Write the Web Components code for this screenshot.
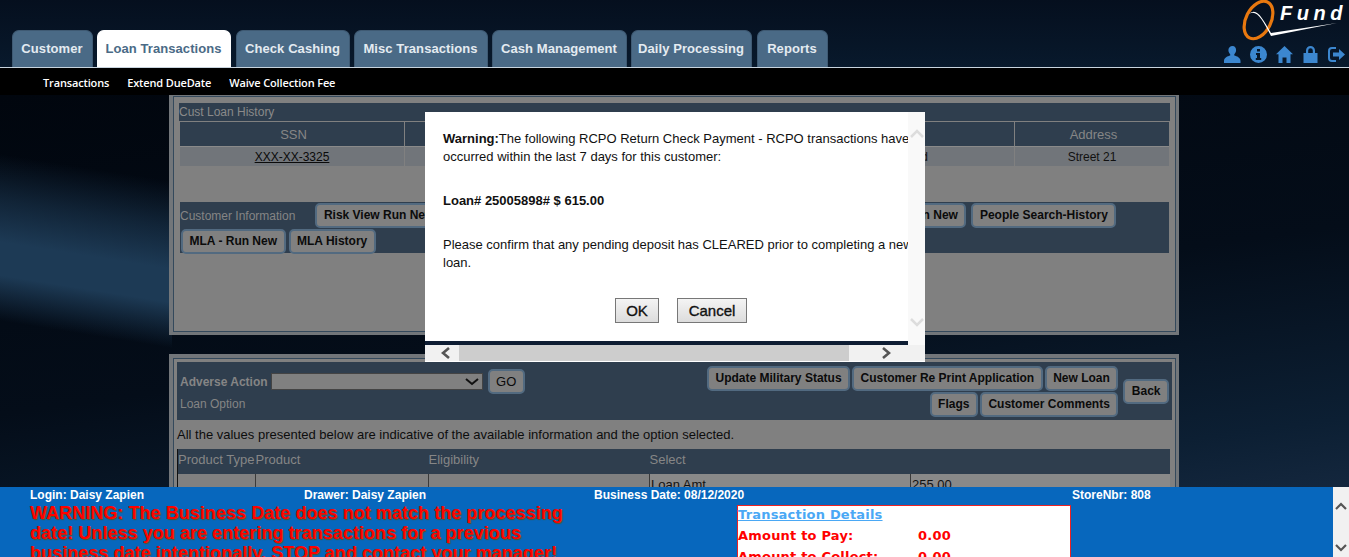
<!DOCTYPE html>
<html><head><meta charset="utf-8">
<style>
html,body{margin:0;height:557px;overflow:hidden}
body{font-family:"Liberation Sans",Arial,sans-serif;background:#050e1b;position:relative}
app-shell{display:flex;flex-direction:column;width:1349px;height:557px}
</style></head><body>
<app-shell>
  <app-header></app-header>
  <sub-nav></sub-nav>
  <main-area></main-area>
  <app-footer></app-footer>
</app-shell>
<warn-dialog></warn-dialog>
<script>
function def(name,html,setup){
  customElements.define(name,class extends HTMLElement{
    constructor(){super();this.attachShadow({mode:'open'}).innerHTML=html;}
    connectedCallback(){setup&&setup(this);}
  });
}
def('nav-tab',`<style>
:host{display:block;height:37px;box-sizing:border-box;border-radius:7px 7px 0 0;background:#4a6a86;border:1px solid #3f5a73;border-bottom:0;color:#e4ebf1;font:bold 13px/36px "Liberation Sans",sans-serif;letter-spacing:.08px;text-align:center;white-space:nowrap;padding-right:1px}
:host([active]){background:#fff;color:#4a6a86;border-color:#fff}
</style><slot></slot>`);
def('app-header',`<style>
:host{display:block;height:67px;flex:none;position:relative;background:linear-gradient(#050f1e,#08192c)}
nav{display:flex;gap:4px;padding:30px 0 0 12px;height:37px;box-sizing:content-box}
.logo{position:absolute;left:1240px;top:0}
.fund{position:absolute;left:1280px;top:2px;font:italic bold 20px "Liberation Sans",sans-serif;letter-spacing:4.5px;color:#fff;white-space:nowrap}
.fund i{letter-spacing:0}
.icons{position:absolute;right:4px;top:46px;display:flex;gap:9px}
.icons svg{width:17px;height:17px;fill:#3c87cf;display:block}
</style>
<nav>
<nav-tab style="width:81px">Customer</nav-tab>
<nav-tab active style="width:134px">Loan Transactions</nav-tab>
<nav-tab style="width:114px;margin-left:1px">Check Cashing</nav-tab>
<nav-tab style="width:134px">Misc Transactions</nav-tab>
<nav-tab style="width:135px">Cash Management</nav-tab>
<nav-tab style="width:121px">Daily Processing</nav-tab>
<nav-tab style="width:71px;margin-left:1px">Reports</nav-tab>
</nav>
<svg class="logo" width="109" height="42" viewBox="0 0 109 42">
<ellipse cx="18.500" cy="20" rx="12.500" ry="20" transform="rotate(27 18.500 20)" fill="none" stroke="#e8780f" stroke-width="3.200"/>
<path d="M9 14C17 7 22 18 31 33L97 23 31 36C23 21 17 9 9 14Z" fill="#fff"/>
</svg>
<span class="fund">Fun<i>d</i></span>
<div class="icons">
<svg viewBox="0 0 17 17"><path d="M8.5 0c2.4 0 3.6 1.800 3.600 4 0 2-1 3.400-1.800 4.200v1.300c2.500 .7 6.200 2 6.200 5.500v2H0v-2c0-3.500 3.700-4.800 6.200-5.500V8.200C5.400 7.400 4.400 6 4.400 4c0-2.200 1.700-4 4.100-4z"/></svg>
<svg viewBox="0 0 17 17"><path fill-rule="evenodd" d="M8.500 0a8.500 8.500 0 1 0 0 17 8.500 8.500 0 0 0 0-17zM7 3h3v2.500H7zM6 7h4v5h1.200v2H5.800v-2H7V9H6z"/></svg>
<svg viewBox="0 0 17 17"><path d="M8.500 0 17 8.200h-2.500V17h-4v-5.500h-4V17h-4V8.200H0z"/></svg>
<svg viewBox="0 0 17 17"><path fill-rule="evenodd" d="M4 7V4.500a4.500 4.500 0 0 1 9 0V7h2.500v10H1.500V7zm2.200 0h4.600V4.500a2.300 2.300 0 0 0-4.600 0z"/></svg>
<svg viewBox="0 0 17 17"><path d="M8 1H4a4 4 0 0 0-4 4v7a4 4 0 0 0 4 4h4v-2H4a2 2 0 0 1-2-2V5a2 2 0 0 1 2-2h4z"/><path d="M11 3v3.500H5v4h6V14l6-5.500z"/></svg>
</div>`);
def('sub-nav',`<style>
:host{display:block;flex:none;height:28px;box-sizing:border-box;border-top:1px solid #c8d4de;background:#000;color:#fff;font:600 11px/29px "Open Sans",sans-serif;letter-spacing:-.15px}
div{display:flex;gap:18px;padding-left:43px}
</style><div><span>Transactions</span><span>Extend DueDate</span><span>Waive Collection Fee</span></div>`);
def('gray-panel',`<style>
:host{display:block;box-sizing:border-box;background:#808080;border-style:solid;border-color:#72767a;border-width:var(--bw,4px 3px 3px 4px);position:relative}
.in{border:1px solid #34495c;padding:var(--pad,6px 5px 0 5px);height:100%;box-sizing:border-box}
</style><div class="in"><slot></slot></div>`);
def('tool-btn',`<style>
:host{display:inline-block;box-sizing:border-box;height:25px;background:#808080;border:2px solid #526a80;border-radius:5px;color:#0b0b0b;font:bold 12px/21px "Liberation Sans",sans-serif;padding:0 6.500px;white-space:nowrap}
</style><slot></slot>`);
def('history-panel',`<style>
:host{display:block}
.t{background:#2f3e4e;color:#8a8a8a;font:12px/18px "Liberation Sans",sans-serif;height:18px;margin:0 0 1px 0;width:991px}
.grid{display:grid;grid-template-columns:225px 610px 154px;width:989px;margin-left:1px;text-align:center;font:12px/21px "Liberation Sans",sans-serif;color:#111}
.h{background:#2f3e4e;color:#868686;font-size:13px;line-height:25px;height:25px;box-sizing:border-box;border-bottom:1px solid #8a8a8a;padding-left:3px}
.c{background:#71757a;height:19px}
.l{border-right:1px solid #808080}
.mid{text-align:right;padding-right:86px}
u{color:#0a0a0a}
.info{margin:36px 0 0 1px;width:989px;height:51px;background:#2f3e4e;box-sizing:border-box;padding-top:1px;color:#858585;font:12px/24px "Liberation Sans",sans-serif}
.r{display:flex;align-items:center;height:25px;gap:2px}
.r span{margin:0 18px 0 0}
</style>
<div class="t">Cust Loan History</div>
<div class="grid">
<div class="h l">SSN</div><div class="h l"></div><div class="h">Address</div>
<div class="c l"><u>XXX-XX-3325</u></div><div class="c l mid">d</div><div class="c">Street 21</div>
</div>
<div class="info">
<div class="r"><span>Customer Information</span><tool-btn style="margin-right:405px;width:122px">Risk View Run New</tool-btn><tool-btn style="width:122px;text-align:right;margin-right:3px">n New</tool-btn><tool-btn>People Search-History</tool-btn></div>
<div class="r" style="gap:3px;margin-top:1px;padding-left:1px"><tool-btn>MLA - Run New</tool-btn><tool-btn>MLA History</tool-btn></div>
</div>`);
def('loan-panel',`<style>
:host{display:block}
.bar{background:#2f3e4e;height:58px;display:flex;justify-content:space-between;box-sizing:border-box;padding:0 3px;font:12px/16px "Liberation Sans",sans-serif;color:#858585}
.lf{padding-top:7px}
.lf .a{display:flex;align-items:center;gap:3px;height:25px}
b{font-size:12px}
.sel{width:212px;height:17px;background:#808080;border:1px solid #444;box-sizing:border-box;display:flex;justify-content:flex-end;align-items:center;padding-right:3px;margin-right:2px}
.rt{display:flex;align-items:center;height:58px}
.rows{display:flex;flex-direction:column;align-items:flex-end;gap:1px;margin-right:5px}
.row{display:flex;gap:2px}
p{margin:0;font:13px/29px "Liberation Sans",sans-serif;color:#0d0d0d;height:29px}
table{border-collapse:collapse;width:993px;table-layout:fixed;font:13px/18px "Liberation Sans",sans-serif;border-left:1px solid #111}
th{background:#2f3e4e;color:#868686;font-weight:normal;text-align:left;height:22px;padding:0 0 3px;white-space:nowrap}
td{border-left:1px solid #3a3a3a;padding:2px 1px 0;height:30px;vertical-align:top;color:#111}
td:first-child{border-left:0}
.v{background:#898989}
</style>
<div class="bar">
<div class="lf"><div class="a"><b>Adverse Action</b><div class="sel"><svg width="14" height="8" viewBox="0 0 14 8"><path d="M1 1l6 5 6-5" fill="none" stroke="#111" stroke-width="2"/></svg></div><tool-btn style="font-weight:normal;font-size:13px">GO</tool-btn></div><div style="margin-top:2px">Loan Option</div></div>
<div class="rt"><div class="rows"><div class="row"><tool-btn>Update Military Status</tool-btn><tool-btn>Customer Re Print Application</tool-btn><tool-btn>New Loan</tool-btn></div><div class="row"><tool-btn>Flags</tool-btn><tool-btn>Customer Comments</tool-btn></div></div><tool-btn>Back</tool-btn></div>
</div>
<p>All the values presented below are indicative of the available information and the option selected.</p>
<table><colgroup><col style="width:78px"><col style="width:173px"><col style="width:221px"><col style="width:261px"><col></colgroup>
<tr><th>Product Type</th><th>Product</th><th>Eligibility</th><th colspan="2">Select</th></tr>
<tr><td></td><td></td><td></td><td class="v">Loan Amt</td><td class="v">255.00</td></tr></table>`);
def('main-area',`<style>
:host{display:block;flex:1;min-height:0;overflow:hidden;position:relative;background:
 linear-gradient(189deg,rgba(29,58,85,0) 85px,rgba(29,58,85,.55) 130px,#1d3a55 172px,#1d3a55 205px,rgba(29,58,85,0) 250px) 0 0/172px 100% no-repeat,
 linear-gradient(172deg,#01060e 0,#040d19 55%,#0c1f33 88%,#172a42 105%)}
.col{width:1010px;margin:0 0 0 169px;display:flex;flex-direction:column;gap:19px}
</style>
<div class="col">
<gray-panel style="height:240px;--bw:1px 3px 3px 4px;--pad:6px 5px 0 5px"><history-panel></history-panel></gray-panel>
<gray-panel style="height:300px;--pad:3px 3px 0 3px"><loan-panel></loan-panel></gray-panel>
</div>`);
def('app-footer',`<style>
:host{display:flex;flex:none;height:70px;background:#0767bd;overflow:hidden}
.m{flex:1;min-width:0;position:relative}
.top{display:grid;grid-template-columns:274px 290px 478px auto;padding:1px 0 0 30px;color:#fff;font:bold 12px/15px "Liberation Sans",sans-serif}
.low{display:flex;padding-left:30px}
.w{width:707px;flex:none;color:#f00;font:bold 18px/20px "Liberation Sans",sans-serif;letter-spacing:.05px;text-shadow:1px 1px 1px #552;box-sizing:border-box;padding-right:160px}
.box{width:334px;height:80px;margin-top:2px;box-sizing:border-box;background:#fff;border:1px solid #e22;border-bottom:0;font:bold 13px/20px "DejaVu Sans",sans-serif;letter-spacing:.2px;color:#f00}
.box u{color:#4aa8f5;display:block;width:max-content;line-height:18px;margin-bottom:2px}
.row{display:flex;height:21px}.row span:first-child{width:180px}
.sb{width:16px;flex:none;background:#f1f1f1;display:flex;flex-direction:column;justify-content:space-between;align-items:center;padding:15px 0 5px;box-sizing:border-box}
</style>
<div class="m"><div class="top"><span>Login: Daisy Zapien</span><span>Drawer: Daisy Zapien</span><span>Business Date: 08/12/2020</span><span>StoreNbr: 808</span></div>
<div class="low"><div class="w">WARNING: The Business Date does not match the processing date! Unless you are entering transactions for a previous business date intentionally, STOP and contact your manager!</div>
<div class="box"><u>Transaction Details</u><div class="row"><span>Amount to Pay:</span><span>0.00</span></div><div class="row"><span>Amount to Collect:</span><span>0.00</span></div></div></div></div>
<div class="sb"><svg width="12" height="8" viewBox="0 0 12 8"><path d="M1 7l5-5 5 5" fill="none" stroke="#555" stroke-width="2.200"/></svg><svg width="12" height="8" viewBox="0 0 12 8"><path d="M1 1l5 5 5-5" fill="none" stroke="#555" stroke-width="2.200"/></svg></div>`);
def('warn-dialog',`<style>
:host{position:absolute;left:425px;top:112px;width:500px;height:250px;display:grid;grid-template-columns:483px 17px;grid-template-rows:233px 17px;background:#fff;overflow:hidden}
.view{overflow:hidden;position:relative;border-bottom:4px solid #0e1d33;box-sizing:border-box;height:233px}
.doc{width:510px;padding:18px 0 0 18px;box-sizing:border-box;font:13px/18px "Liberation Sans",sans-serif;color:#111}
p{margin:0}
.g{margin-top:26px}
.bt{display:flex;gap:18px;margin:26px 0 0 172px}
button{all:unset;box-sizing:border-box;height:25px;border:1px solid #777;background:linear-gradient(#f4f4f4,#dcdcdc);font:15px/23px "Liberation Sans",sans-serif;text-align:center;color:#111;-webkit-text-stroke:.35px #111}
.v{background:#f9f9f9;display:flex;flex-direction:column;justify-content:space-between;align-items:center;padding:17px 0 18px;box-sizing:border-box}
.h{grid-column:1/3;background:#f1f1f1;display:flex;align-items:center;justify-content:space-between;padding:0 34px 0 16px;height:16px;position:relative}
.thumb{position:absolute;left:34px;width:390px;top:0;bottom:0;background:#cdcdcd}
</style>
<div class="view"><div class="doc">
<p style="width:480px"><b>Warning:</b>The following RCPO Return Check Payment - RCPO transactions have occurred within the last 7 days for this customer:</p>
<p class="g"><b>Loan# 25005898# $ 615.00</b></p>
<p class="g" style="width:480px">Please confirm that any pending deposit has CLEARED prior to completing a new loan.</p>
<div class="bt"><button style="width:44px">OK</button><button style="width:70px">Cancel</button></div>
</div></div>
<div class="v"><svg width="14" height="9" viewBox="0 0 14 9"><path d="M1 8l6-6 6 6" fill="none" stroke="#ddd" stroke-width="2.500"/></svg><svg width="14" height="9" viewBox="0 0 14 9"><path d="M1 1l6 6 6-6" fill="none" stroke="#ddd" stroke-width="2.500"/></svg></div>
<div class="h"><div class="thumb"></div><svg width="10" height="12" viewBox="0 0 10 12"><path d="M8 1L2 6l6 5" fill="none" stroke="#555" stroke-width="2.600"/></svg><svg width="10" height="12" viewBox="0 0 10 12"><path d="M2 1l6 5-6 5" fill="none" stroke="#555" stroke-width="2.600"/></svg></div>`);
</script>
</body></html>
